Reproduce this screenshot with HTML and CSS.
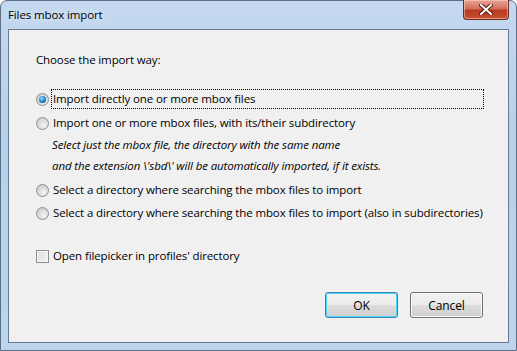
FILE: index.html
```html
<!DOCTYPE html>
<html lang="en">
<head>
  <meta charset="UTF-8">
  <title>Files mbox import</title>
  <link rel="stylesheet" href="styles.css">
</head>
<body>
  <div class="window">
    <div class="titlebar">
      <span class="title">Files mbox import</span>
      <button class="close" title="Close">
        <svg width="14" height="11" viewBox="0 0 14 11">
          <path d="M2 1 L12 10 M12 1 L2 10" stroke="#5a1a10" stroke-width="4" stroke-linecap="square"/>
          <path d="M2 1 L12 10 M12 1 L2 10" stroke="#ffffff" stroke-width="2" stroke-linecap="square"/>
        </svg>
      </button>
    </div>

    <div class="client">
      <div class="prompt">Choose the import way:</div>

      <div class="option first">
        <span class="radio checked"></span>
        <span class="label focused">Import directly one or more mbox files</span>
      </div>
      <div class="option second">
        <span class="radio"></span>
        <span class="label">Import one or more mbox files, with its/their subdirectory</span>
      </div>
      <div class="note note-first">Select just the mbox file, the directory with the same name</div>
      <div class="note note-second">and the extension \'sbd\' will be automatically imported, if it exists.</div>
      <div class="option third">
        <span class="radio"></span>
        <span class="label">Select a directory where searching the mbox files to import</span>
      </div>
      <div class="option fourth">
        <span class="radio"></span>
        <span class="label">Select a directory where searching the mbox files to import (also in subdirectories)</span>
      </div>

      <div class="option check-row">
        <span class="checkbox"></span>
        <span class="label">Open filepicker in profiles' directory</span>
      </div>

      <div class="buttons">
        <button class="btn default">OK</button>
        <button class="btn">Cancel</button>
      </div>
    </div>
  </div>
</body>
</html>
```

FILE: styles.css
```css
body {
  margin: 0;
  font-family: "Open Sans", "Noto Sans", sans-serif;
  font-size: 11.5px;
  letter-spacing: -0.12px;
  color: #000;
}
.window {
  width: 517px;
  height: 351px;
  box-sizing: border-box;
  padding: 0 7px 7px 7px;
  border: 1px solid #5b6f86;
  border-radius: 7px 7px 0 0;
  background: linear-gradient(to bottom, #c4d9f0 0%, #b7d0eb 40%, #bcd5ef 100%);
  display: flex;
  flex-direction: column;
}
.titlebar {
  height: 28px;
  display: flex;
  justify-content: space-between;
  align-items: flex-start;
}
.title {
  margin-top: 6px;
  color: #000;
  text-shadow: 0 0 6px #e6eff9;
}
.close {
  width: 46px;
  height: 20px;
  margin: -1px 0 0 0;
  padding: 0;
  border: 1px solid #6c2b22;
  border-top: none;
  border-radius: 0 0 4px 4px;
  background: linear-gradient(to bottom, #e8a493 0%, #d2705c 45%, #b93a24 55%, #c8502f 100%);
  box-shadow: inset 0 0 0 1px rgba(255, 220, 210, 0.5);
  display: flex;
  align-items: center;
  justify-content: center;
}
.client {
  flex: 1;
  background: #f0f0f0;
  border: 1px solid #6a7a8c;
  padding: 21px 24px 0 27px;
  display: flex;
  flex-direction: column;
}
.prompt {
  height: 18px;
  line-height: 18px;
}
.option {
  height: 18px;
  line-height: 18px;
  display: flex;
  align-items: center;
}
.option.first { margin-top: 21px; }
.option.second { margin-top: 6px; }
.option.third { margin-top: 6px; }
.option.fourth { margin-top: 5px; }
.option.check-row { margin-top: 25px; }
.label {
  margin-left: 2px;
  padding: 0 1px;
  border: 1px dotted transparent;
  white-space: nowrap;
}
.label.focused {
  flex: 1;
  border-color: #000;
}
.note {
  height: 18px;
  line-height: 18px;
  margin-left: 16px;
  font-style: italic;
  white-space: nowrap;
}
.note-first { margin-top: 4px; }
.note-second { margin-top: 3px; }
.radio {
  width: 11px;
  height: 11px;
  border-radius: 50%;
  border: 1px solid #8e8f8f;
  background: radial-gradient(circle at 60% 65%, #f4f4f4 0%, #d6d6d6 60%, #c0c0c0 100%);
  position: relative;
  flex: none;
}
.radio.checked::after {
  content: "";
  position: absolute;
  left: 2px;
  top: 2px;
  width: 7px;
  height: 7px;
  border-radius: 50%;
  background: radial-gradient(circle at 40% 35%, #8fe0ff 0%, #1d7ad0 55%, #0e3f7a 100%);
}
.checkbox {
  width: 11px;
  height: 11px;
  border: 1px solid #8e8f8f;
  background: linear-gradient(135deg, #dcdcdc 0%, #f4f4f4 100%);
  box-shadow: inset 0 0 0 1px #f6f6f6;
  flex: none;
}
.buttons {
  margin-top: 27px;
  margin-right: 1px;
  display: flex;
  justify-content: flex-end;
  gap: 12px;
}
.btn {
  width: 73px;
  height: 26px;
  padding: 0;
  font-family: inherit;
  font-size: 12px;
  letter-spacing: inherit;
  color: #000;
  border: 1px solid #707070;
  border-radius: 3px;
  background: linear-gradient(to bottom, #f2f2f2 0%, #ebebeb 50%, #dddddd 51%, #cfcfcf 100%);
  box-shadow: inset 0 0 0 1px #fbfbfb;
}
.btn.default {
  border-color: #3c7fb1;
  box-shadow: inset 0 0 0 1px #48d8fd;
}
```
